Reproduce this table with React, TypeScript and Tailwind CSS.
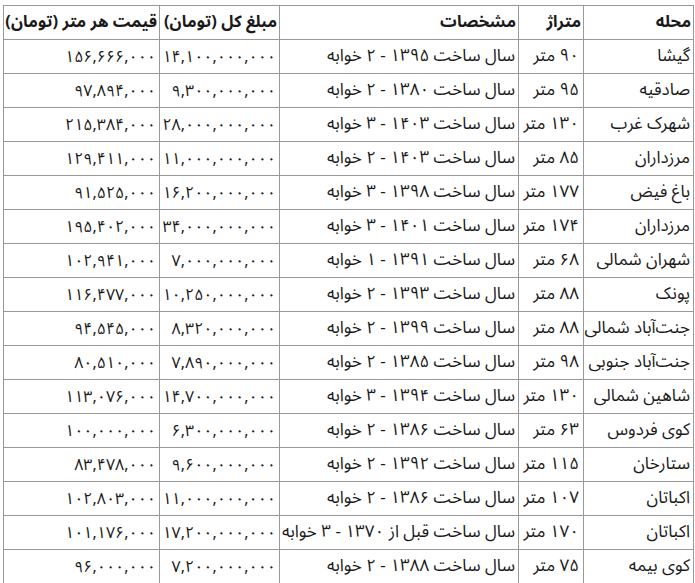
import React from "react";

const rows: [string, string, string, string, string][] = [
  ["گیشا", "۹۰ متر", "سال ساخت ۱۳۹۵ - ۲ خوابه", "۱۴,۱۰۰,۰۰۰,۰۰۰", "۱۵۶,۶۶۶,۰۰۰"],
  ["صادقیه", "۹۵ متر", "سال ساخت ۱۳۸۰ - ۲ خوابه", "۹,۳۰۰,۰۰۰,۰۰۰", "۹۷,۸۹۴,۰۰۰"],
  ["شهرک غرب", "۱۳۰ متر", "سال ساخت ۱۴۰۳ - ۳ خوابه", "۲۸,۰۰۰,۰۰۰,۰۰۰", "۲۱۵,۳۸۴,۰۰۰"],
  ["مرزداران", "۸۵ متر", "سال ساخت ۱۴۰۳ - ۲ خوابه", "۱۱,۰۰۰,۰۰۰,۰۰۰", "۱۲۹,۴۱۱,۰۰۰"],
  ["باغ فیض", "۱۷۷ متر", "سال ساخت ۱۳۹۸ - ۳ خوابه", "۱۶,۲۰۰,۰۰۰,۰۰۰", "۹۱,۵۲۵,۰۰۰"],
  ["مرزداران", "۱۷۴ متر", "سال ساخت ۱۴۰۱ - ۳ خوابه", "۳۴,۰۰۰,۰۰۰,۰۰۰", "۱۹۵,۴۰۲,۰۰۰"],
  ["شهران شمالی", "۶۸ متر", "سال ساخت ۱۳۹۱ - ۱ خوابه", "۷,۰۰۰,۰۰۰,۰۰۰", "۱۰۲,۹۴۱,۰۰۰"],
  ["پونک", "۸۸ متر", "سال ساخت ۱۳۹۳ - ۲ خوابه", "۱۰,۲۵۰,۰۰۰,۰۰۰", "۱۱۶,۴۷۷,۰۰۰"],
  ["جنت‌آباد شمالی", "۸۸ متر", "سال ساخت ۱۳۹۹ - ۲ خوابه", "۸,۳۲۰,۰۰۰,۰۰۰", "۹۴,۵۴۵,۰۰۰"],
  ["جنت‌آباد جنوبی", "۹۸ متر", "سال ساخت ۱۳۸۵ - ۲ خوابه", "۷,۸۹۰,۰۰۰,۰۰۰", "۸۰,۵۱۰,۰۰۰"],
  ["شاهین شمالی", "۱۳۰ متر", "سال ساخت ۱۳۹۴ - ۳ خوابه", "۱۴,۷۰۰,۰۰۰,۰۰۰", "۱۱۳,۰۷۶,۰۰۰"],
  ["کوی فردوس", "۶۳ متر", "سال ساخت ۱۳۸۶ - ۲ خوابه", "۶,۳۰۰,۰۰۰,۰۰۰", "۱۰۰,۰۰۰,۰۰۰"],
  ["ستارخان", "۱۱۵ متر", "سال ساخت ۱۳۹۲ - ۲ خوابه", "۹,۶۰۰,۰۰۰,۰۰۰", "۸۳,۴۷۸,۰۰۰"],
  ["اکباتان", "۱۰۷ متر", "سال ساخت ۱۳۸۶ - ۲ خوابه", "۱۱,۰۰۰,۰۰۰,۰۰۰", "۱۰۲,۸۰۳,۰۰۰"],
  ["اکباتان", "۱۷۰ متر", "سال ساخت قبل از ۱۳۷۰ - ۳ خوابه", "۱۷,۲۰۰,۰۰۰,۰۰۰", "۱۰۱,۱۷۶,۰۰۰"],
  ["کوی بیمه", "۷۵ متر", "سال ساخت ۱۳۸۸ - ۲ خوابه", "۷,۲۰۰,۰۰۰,۰۰۰", "۹۶,۰۰۰,۰۰۰"],
];

const headers = ["محله", "متراژ", "مشخصات", "مبلغ کل (تومان)", "قیمت هر متر (تومان)"];

export default function App() {
  return (
    <div
      className="bg-white pt-[5px] px-[3px] text-[16px] text-[#1a1a1a]"
      style={{ fontFamily: '"Noto Sans Arabic", "Noto Naskh Arabic", "Noto Sans", "DejaVu Sans", sans-serif' }}
    >
      <table dir="rtl" className="w-[690px] table-fixed border-collapse border border-[#999]">
        <colgroup>
          <col className="w-[110px]" />
          <col className="w-[65px]" />
          <col className="w-[239px]" />
          <col className="w-[120px]" />
          <col className="w-[156px]" />
        </colgroup>
        <thead>
          <tr className="h-[34px]">
            {headers.map((h) => (
              <th
                key={h}
                className="border border-[#999] px-[2px] text-right text-[16.5px] font-bold whitespace-nowrap"
              >
                {h}
              </th>
            ))}
          </tr>
        </thead>
        <tbody>
          {rows.map((r, i) => (
            <tr key={i} className="h-[34px]">
              <td className="border border-[#999] px-[3px] text-right text-[17px] whitespace-nowrap">{r[0]}</td>
              <td className="border border-[#999] px-[4px] text-right text-[17px] whitespace-nowrap">{r[1]}</td>
              <td className="border border-[#999] px-[3px] text-right text-[17px] whitespace-nowrap">{r[2]}</td>
              <td className="border border-[#999] px-[3px] text-right whitespace-nowrap">{r[3]}</td>
              <td className="border border-[#999] px-[3px] text-right whitespace-nowrap">{r[4]}</td>
            </tr>
          ))}
        </tbody>
      </table>
    </div>
  );
}
